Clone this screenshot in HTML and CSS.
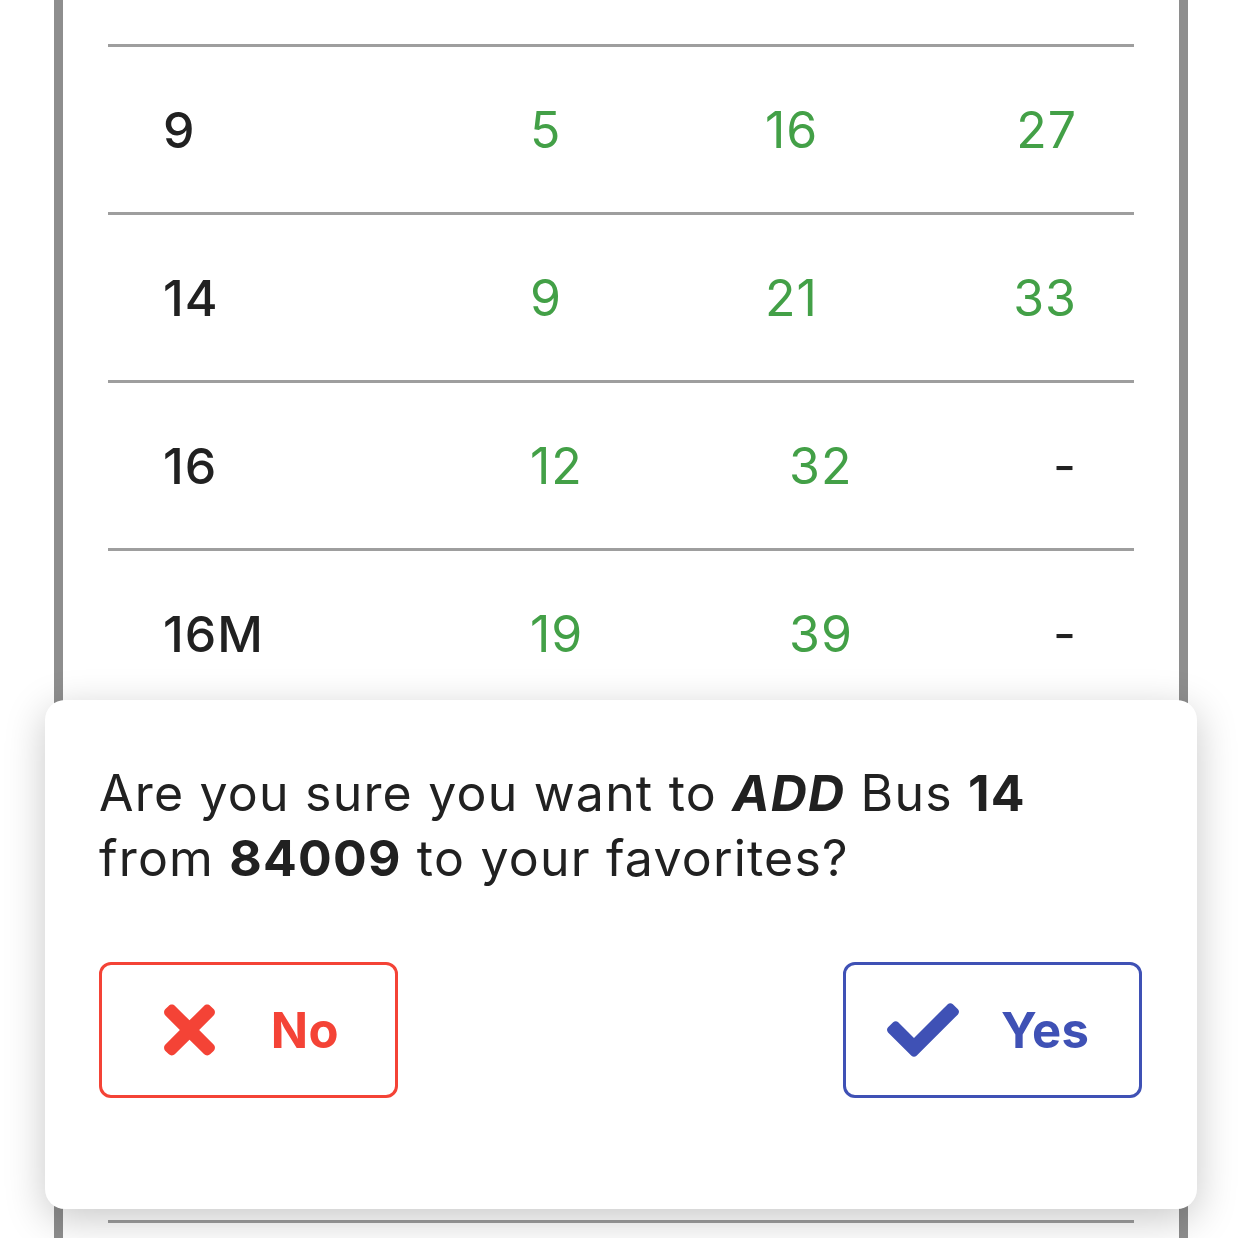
FILE: index.html
```html
<!DOCTYPE html>
<html lang="en">
<head>
<meta charset="utf-8">
<title>Bus arrivals</title>
<link rel="stylesheet" href="styles.css">
</head>
<body>
<div class="screen">
  <div class="card">
    <div class="list">
      <div class="row"><span class="route">9</span><span class="t c2">5</span><span class="t c3">16</span><span class="t c4">27</span></div>
      <div class="row"><span class="route">14</span><span class="t c2">9</span><span class="t c3">21</span><span class="t c4">33</span></div>
      <div class="row"><span class="route">16</span><span class="t c2">12</span><span class="t c3 shift">32</span><span class="t c4 dash">-</span></div>
      <div class="row"><span class="route">16M</span><span class="t c2">19</span><span class="t c3 shift">39</span><span class="t c4 dash">-</span></div>
      <div class="row row-covered"></div>
      <div class="row row-covered"></div>
      <div class="row row-covered"></div>
    </div>
  </div>

  <div class="dialog">
    <p class="message">Are you sure you want to <b><i>ADD</i></b> Bus <b>14</b> from <b>84009</b> to your favorites?</p>
    <div class="actions">
      <button class="btn btn-no">
        <svg class="icon icon-x" viewBox="0 0 352 512" aria-hidden="true"><path d="M242.72 256l100.07-100.07c12.28-12.28 12.28-32.19 0-44.48l-22.24-22.24c-12.28-12.28-32.19-12.280-44.48 0L176 189.28 75.93 89.21c-12.28-12.28-32.19-12.28-44.48 0L9.21 111.45c-12.28 12.28-12.28 32.19 0 44.48L109.28 256 9.21 356.07c-12.28 12.28-12.28 32.19 0 44.48l22.24 22.24c12.28 12.28 32.2 12.28 44.48 0L176 322.72l100.07 100.07c12.28 12.28 32.2 12.28 44.48 0l22.24-22.24c12.28-12.28 12.28-32.19 0-44.48L242.72 256z"/></svg>
        <span>No</span>
      </button>
      <button class="btn btn-yes">
        <svg class="icon icon-check" viewBox="0 64 512 384" aria-hidden="true"><path d="M173.898 439.404l-166.4-166.4c-9.997-9.997-9.997-26.206 0-36.204l36.203-36.204c9.997-9.998 26.207-9.998 36.204 0L192 312.69 432.095 72.596c9.997-9.997 26.207-9.997 36.204 0l36.203 36.204c9.997 9.997 9.997 26.206 0 36.204l-294.4 294.401c-9.998 9.997-26.207 9.997-36.204-.001z"/></svg>
        <span>Yes</span>
      </button>
    </div>
  </div>
</div>
</body>
</html>
```

FILE: styles.css
```css
html, body {
  margin: 0;
  padding: 0;
  background: #ffffff;
}

body {
  font-family: Inter, "Noto Sans", "Liberation Sans", sans-serif;
  color: #212121;
  overflow: hidden;
}

.screen {
  position: relative;
  width: 1242px;
  height: 1238px;
  overflow: hidden;
}

.card {
  margin-left: 54px;
  width: 1134px;
  height: 1238px;
  box-sizing: border-box;
  border-left: 9px solid #8e8e8e;
  border-right: 9px solid #8e8e8e;
  background: #ffffff;
}

.list {
  padding: 44px 45px 0 45px;
}

.row {
  box-sizing: border-box;
  height: 168px;
  border-top: 3px solid #9e9e9e;
  display: grid;
  grid-template-columns: 367px 235px 1fr 1fr;
  align-items: center;
  padding: 0 57px 0 55px;
  font-size: 50px;
  letter-spacing: 1px;
}

.row:last-child {
  height: 171px;
  border-bottom: 3px solid #9e9e9e;
}

.route {
  font-weight: 500;
  color: #212121;
}

.t {
  color: #43a047;
  font-weight: 400;
}

.c4 {
  text-align: right;
}

.shift {
  padding-left: 24px;
}

.dash {
  color: #212121;
}

.dialog {
  position: absolute;
  left: 45px;
  top: 700px;
  width: 1152px;
  height: 509px;
  box-sizing: border-box;
  background: #ffffff;
  border-radius: 20px;
  box-shadow: 0 10px 40px rgba(0, 0, 0, 0.22);
  padding: 61px 55px 0 54px;
}

.message {
  margin: 0;
  max-width: 1000px;
  font-size: 50px;
  line-height: 65px;
  letter-spacing: 1.2px;
  color: #212121;
}

.message b {
  font-weight: 700;
}

.actions {
  margin-top: 71px;
  display: flex;
  justify-content: space-between;
}

.btn {
  box-sizing: border-box;
  width: 299px;
  height: 136px;
  background: #ffffff;
  border-radius: 12px;
  border: 3px solid;
  display: flex;
  align-items: center;
  justify-content: space-evenly;
  font-family: inherit;
  font-size: 49px;
  font-weight: 700;
  letter-spacing: 0.5px;
  padding: 0;
}

.btn-no {
  border-color: #f44336;
  color: #f44336;
  padding-left: 6px;
}

.btn-yes {
  border-color: #3f51b5;
  color: #3f51b5;
  padding-right: 8px;
}

.icon {
  fill: currentColor;
  display: block;
}

.icon-x {
  width: 51px;
  height: 74px;
}

.icon-check {
  width: 72px;
  height: 54px;
}
```
